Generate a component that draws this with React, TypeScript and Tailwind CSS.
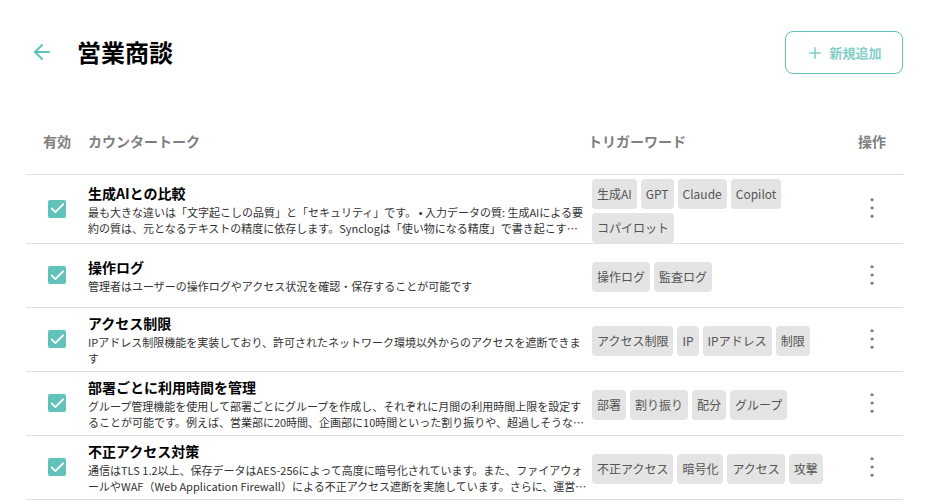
import { ArrowLeft, Plus, Check, MoreVertical } from 'lucide-react';

const rows = [
  {
    title: '生成AIとの比較',
    body: '最も大きな違いは「文字起こしの品質」と「セキュリティ」です。 • 入力データの質: 生成AIによる要約の質は、元となるテキストの精度に依存します。Synclogは「使い物になる精度」で書き起こすため、要約の品質も高くなります。',
    tags: ['生成AI', 'GPT', 'Claude', 'Copilot', 'コパイロット'],
    height: 'h-[69px]',
  },
  {
    title: '操作ログ',
    body: '管理者はユーザーの操作ログやアクセス状況を確認・保存することが可能です',
    tags: ['操作ログ', '監査ログ'],
    height: 'h-[64px]',
  },
  {
    title: 'アクセス制限',
    body: 'IPアドレス制限機能を実装しており、許可されたネットワーク環境以外からのアクセスを遮断できます',
    tags: ['アクセス制限', 'IP', 'IPアドレス', '制限'],
    height: 'h-[64px]',
  },
  {
    title: '部署ごとに利用時間を管理',
    body: 'グループ管理機能を使用して部署ごとにグループを作成し、それぞれに月間の利用時間上限を設定することが可能です。例えば、営業部に20時間、企画部に10時間といった割り振りや、超過しそうな場合の通知も設定できます。',
    tags: ['部署', '割り振り', '配分', 'グループ'],
    height: 'h-[64px]',
  },
  {
    title: '不正アクセス対策',
    body: '通信はTLS 1.2以上、保存データはAES-256によって高度に暗号化されています。また、ファイアウォールやWAF（Web Application Firewall）による不正アクセス遮断を実施しています。さらに、運営側の担当者によるアクセスも厳しく制限されています。',
    tags: ['不正アクセス', '暗号化', 'アクセス', '攻撃'],
    height: 'h-[64px]',
  },
];

export default function App() {
  return (
    <div className="w-[926px] h-[503px] overflow-hidden bg-white font-['Noto_Sans_CJK_JP',sans-serif] pl-[26px] pr-[23px] pt-[31px]">
      <div className="flex items-center justify-between h-[43px]">
        <div className="flex items-center">
          <ArrowLeft size={24} strokeWidth={2} className="text-[#5fc2bb] ml-[4px] -translate-y-px" />
          <h1 className="ml-[23px] text-[24px] font-bold text-black leading-none -translate-y-px">営業商談</h1>
        </div>
        <button className="w-[118px] h-[43px] flex items-center justify-center gap-[5px] border border-[#5fc2bb] rounded-lg text-[13px] font-bold text-[#82cfca]">
          <Plus size={18} strokeWidth={2} />
          <span>新規追加</span>
        </button>
      </div>

      <div className="flex items-center h-[101px] pt-[35px] text-[14px] font-bold text-[#808080] border-b border-[#e0e0e0]">
        <div className="w-[62px] text-center">有効</div>
        <div className="w-[502px]">カウンタートーク</div>
        <div className="flex-1 -ml-[2px]">トリガーワード</div>
        <div className="w-[62px] text-center">操作</div>
      </div>

      {rows.map((row) => (
        <div key={row.title} className={`flex items-center border-b border-[#e0e0e0] ${row.height}`}>
          <div className="w-[62px] flex justify-center pb-px">
            <span className="w-[18px] h-[18px] rounded-[2px] bg-[#5fc2bb] flex items-center justify-center">
              <Check size={17} strokeWidth={2.5} className="text-white" />
            </span>
          </div>
          <div className="w-[504px] pr-[5px]">
            <div className="text-[14px] font-bold leading-[21px] text-black">{row.title}</div>
            <p className="text-[11px] leading-[16px] text-[#333] line-clamp-2">{row.body}</p>
          </div>
          <div className="flex-1 flex flex-wrap gap-[4px] pt-[3px]">
            {row.tags.map((tag) => (
              <span key={tag} className="h-[30px] px-[5px] flex items-center rounded-[4px] bg-[#e4e4e4] text-[12px] text-[#555]">
                {tag}
              </span>
            ))}
          </div>
          <div className="w-[62px] flex justify-center -translate-y-px">
            <MoreVertical size={28} strokeWidth={0.6} className="text-[#757575] fill-current" />
          </div>
        </div>
      ))}
    </div>
  );
}
